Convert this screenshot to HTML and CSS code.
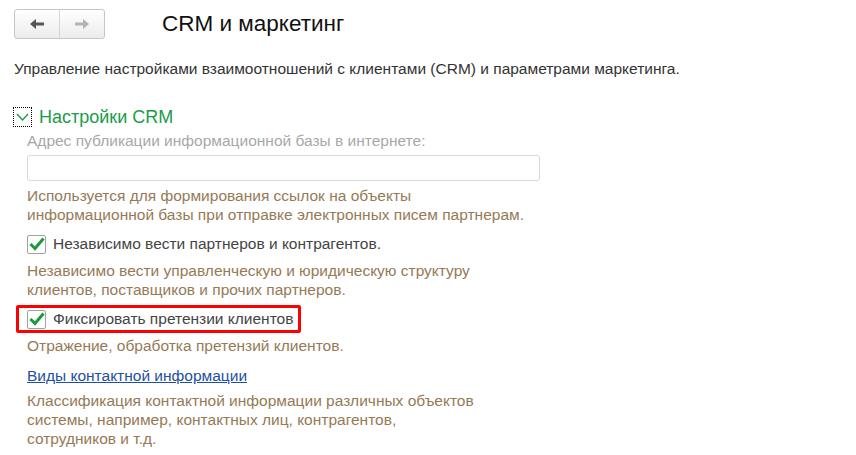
FILE: index.html
```html
<!DOCTYPE html>
<html lang="ru">
<head>
    <meta charset="UTF-8">
    <title>CRM и маркетинг</title>
    <link rel="stylesheet" href="styles.css">
</head>
<body>
    <div class="page">
        <div class="header">
            <div class="nav">
                <button class="nav-btn">
                    <svg width="16" height="12" viewBox="0 0 16 12"><path d="M1 6 L7 1 V4.5 H15 V7.5 H7 V11 Z" fill="#555"/></svg>
                </button>
                <button class="nav-btn">
                    <svg width="16" height="12" viewBox="0 0 16 12"><path d="M15 6 L9 1 V4.5 H1 V7.5 H9 V11 Z" fill="#b3b3b3"/></svg>
                </button>
            </div>
            <h1>CRM и маркетинг</h1>
        </div>

        <div class="intro">Управление настройками взаимоотношений с клиентами (CRM) и параметрами маркетинга.</div>

        <div class="group-head">
            <span class="toggle">
                <svg width="13" height="8" viewBox="0 0 13 8"><path d="M1 1 L6.5 7 L12 1" fill="none" stroke="#1a9c4a" stroke-width="1.4"/></svg>
            </span>
            <span class="group-title">Настройки CRM</span>
        </div>

        <div class="group-body">
            <div class="field-label">Адрес публикации информационной базы в интернете:</div>
            <input class="field-input" type="text">
            <div class="note note-first">Используется для формирования ссылок на объекты<br>информационной базы при отправке электронных писем партнерам.</div>

            <div class="check-row">
                <span class="checkbox"><svg width="16" height="14" viewBox="0 0 16 14"><path d="M1.5 7 L6 11.5 L14.5 1.5" fill="none" stroke="#1b9a3e" stroke-width="3"/></svg></span>
                <span class="check-label">Независимо вести партнеров и контрагентов.</span>
            </div>
            <div class="note">Независимо вести управленческую и юридическую структуру<br>клиентов, поставщиков и прочих партнеров.</div>

            <div class="check-row marked">
                <span class="checkbox"><svg width="16" height="14" viewBox="0 0 16 14"><path d="M1.5 7 L6 11.5 L14.5 1.5" fill="none" stroke="#1b9a3e" stroke-width="3"/></svg></span>
                <span class="check-label">Фиксировать претензии клиентов</span>
            </div>
            <div class="note">Отражение, обработка претензий клиентов.</div>

            <a class="link" href="#">Виды контактной информации</a>
            <div class="note note-link">Классификация контактной информации различных объектов<br>системы, например, контактных лиц, контрагентов,<br>сотрудников и т.д.</div>
        </div>
    </div>
</body>
</html>
```

FILE: styles.css
```css
body {
    margin: 0;
    background: #fff;
    font-family: "Liberation Sans", Arial, sans-serif;
    font-size: 15.5px;
    color: #333;
}
.page {
    padding: 9px 0 0 14px;
}
.header {
    display: flex;
    align-items: center;
    height: 30px;
}
.nav {
    display: flex;
    width: 91px;
    height: 30px;
    box-sizing: border-box;
    border: 1px solid #c6c6c6;
    border-radius: 3px;
    background: linear-gradient(#ffffff, #ececec);
}
.nav-btn {
    flex: 1;
    display: flex;
    align-items: center;
    justify-content: center;
    border: none;
    background: none;
    padding: 0;
}
.nav-btn + .nav-btn {
    border-left: 1px solid #d6d6d6;
}
h1 {
    margin: 0 0 0 57px;
    font-size: 22.5px;
    font-weight: normal;
    color: #111;
}
.intro {
    margin-top: 20px;
    line-height: 19px;
}
.group-head {
    display: flex;
    align-items: center;
    margin-top: 29px;
    height: 20px;
}
.toggle {
    display: flex;
    align-items: center;
    justify-content: center;
    width: 19px;
    height: 20px;
    box-sizing: border-box;
    border: 1px dotted #000;
    margin-left: -1px;
}
.group-title {
    margin-left: 7px;
    font-size: 18px;
    color: #1a9c4a;
}
.group-body {
    padding-left: 13px;
}
.field-label {
    margin-top: 4px;
    line-height: 19px;
    color: #a8a8a8;
}
.field-input {
    display: block;
    margin-top: 5px;
    width: 513px;
    height: 26px;
    box-sizing: border-box;
    border: 1px solid #d9d9d9;
    border-radius: 3px;
}
.note {
    margin-top: 3px;
    line-height: 19px;
    color: #957a56;
}
.note-first {
    margin-top: 5px;
}
.check-row {
    display: inline-flex;
    align-items: center;
    margin: 6px 0 0 -11px;
    height: 28px;
    box-sizing: border-box;
    border: 3px solid transparent;
    border-radius: 2px;
    padding: 0 5px 0 8px;
}
.check-row.marked {
    border-color: #f00;
}
.checkbox {
    display: flex;
    align-items: center;
    justify-content: center;
    width: 19px;
    height: 19px;
    box-sizing: border-box;
    border: 1px solid #a2a2a2;
    border-radius: 2px;
}
.check-label {
    margin-left: 7px;
    color: #444;
}
.link {
    display: inline-block;
    margin-top: 11px;
    line-height: 19px;
    color: #1d4fa6;
}
.note-link {
    margin-top: 6px;
}
```
